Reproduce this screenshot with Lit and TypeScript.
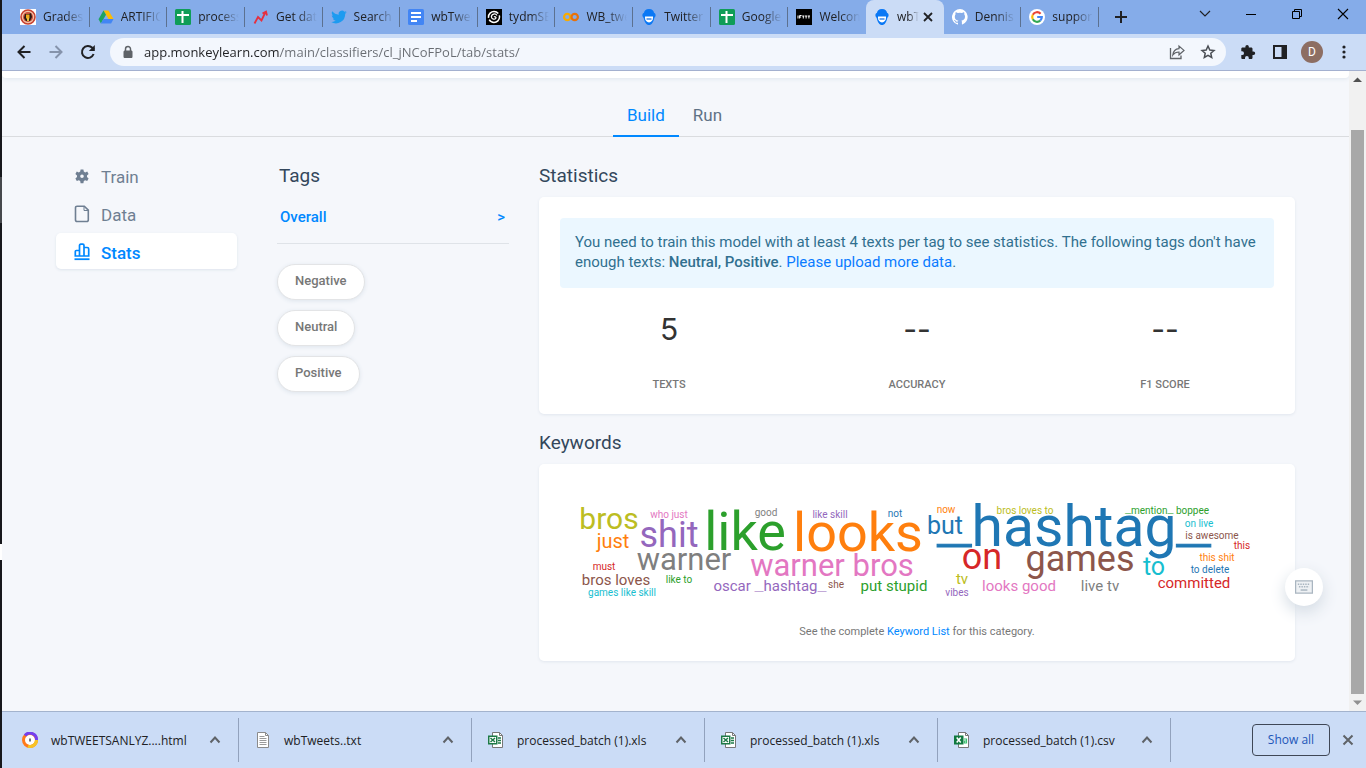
import { LitElement, html, svg, css } from "lit";
import { customElement } from "lit/decorators.js";
import { classMap } from "lit/directives/class-map.js";

const icons: Record<string, unknown> = {
  grades: svg`<rect width="16" height="16" fill="#fff"/><circle cx="8" cy="8" r="7" fill="#f2c3a8" stroke="#c8402f" stroke-width="1.600"/><circle cx="8" cy="8" r="5" fill="#c8523c"/><path d="M5 5h4l2-1 1 4-2 4H6L4 9z" fill="#2b1a14"/><path d="M6 5.500h3.500v4H6z" fill="#f1a91e"/><path d="M7 9h2v3H7z" fill="#e8c23c"/>`,
  drive: svg`<path d="M5.5 1.5h5l5 8.6h-5z" fill="#fbbc04"/><path d="M5.5 1.5 8 5.8 2.9 14.4.5 10.2z" fill="#1ea362"/><path d="M5.3 10.1h10.2l-2.400 4.300H2.900z" fill="#4285f4"/>`,
  sheets: svg`<rect width="16" height="16" rx="1.5" fill="#0f9d58"/><path d="M6.500 2h2v12h-2zM2 5h12v2H2z" fill="#fff"/>`,
  trend: svg`<path d="M1.500 14.500 5 8l3.500 3.500L12.500 3M9.500 4.500l3.500-2 1 4" fill="none" stroke="#e5303f" stroke-width="1.800"/>`,
  twitter: svg`<path d="M15.800 3.200c-.6.3-1.200.4-1.800.5.7-.4 1.100-1 1.400-1.700-.6.4-1.300.6-2 .8A3.200 3.200 0 0 0 7.800 5.700C5.200 5.600 2.800 4.300 1.200 2.300c-.9 1.500-.4 3.300 1 4.300-.5 0-1-.2-1.400-.4 0 1.500 1 2.900 2.500 3.200-.5.1-1 .1-1.400 0 .4 1.300 1.600 2.200 3 2.200A6.500 6.500 0 0 1 .2 13 9.200 9.200 0 0 0 14.200 4.800c.6-.4 1.200-1 1.600-1.600z" fill="#1d9bf0"/>`,
  docs: svg`<rect width="16" height="16" rx="1.500" fill="#4285f4"/><path d="M3 4h10M3 8h10M3 12h6" stroke="#fff" stroke-width="1.800"/>`,
  spiral: svg`<rect width="16" height="16" fill="#000"/><circle cx="8" cy="8" r="5.500" fill="none" stroke="#fff" stroke-width="1.500" stroke-dasharray="14 2"/><path d="M8 8a1.200 1.200 0 0 1 2 1 2.500 2.500 0 0 1-4.600-1A3 3 0 0 1 11 6.500" fill="none" stroke="#fff" stroke-width="1.300"/>`,
  colab: svg`<circle cx="4.300" cy="8" r="3.200" fill="none" stroke="#f9ab00" stroke-width="2.200"/><circle cx="11.700" cy="8" r="3.200" fill="none" stroke="#e8710a" stroke-width="2.200"/>`,
  monkey: svg`<path d="M8 0c3.300 0 4.900 2 5 3.700 1.200.5 1.600 1.500 1.600 2.600 0 1.300-.6 2-1.300 2.600C12.600 13 10.500 16 8 16s-4.600-3-5.300-7.100C2 8.300 1.400 7.600 1.400 6.300c0-1.100.4-2.100 1.600-2.600C3.100 2 4.700 0 8 0z" fill="#0a78f5"/><path d="M4 7.500h8v1.300C12 11.500 10.200 13.500 8 13.500S4 11.500 4 8.800z" fill="#fff"/><path d="M5.500 10h5" stroke="#0a6ae0" stroke-width="1.200"/>`,
  ifttt: svg`<rect width="16" height="16" fill="#000"/><path d="M2 6.500v3M3.600 9.500v-3h2M3.600 8h1.500M6.200 7h2.200M7.300 7v2.500M9 7h2.200M10.100 7v2.500M11.800 7H14M12.900 7v2.500" stroke="#fff" stroke-width="1" fill="none"/>`,
  github: svg`<path d="M8 0a8 8 0 0 0-2.500 15.600c.4.1.5-.2.5-.4v-1.500c-2 .5-2.600-.5-2.800-1-.1-.2-.5-1-.9-1.100-.3-.2-.7-.6 0-.6s1.100.6 1.200.8c.7 1.200 1.900.9 2.400.7.1-.5.300-.9.5-1.100-1.800-.2-3.600-.9-3.600-4 0-.9.3-1.600.8-2.100-.1-.2-.4-1 .1-2.100 0 0 .7-.2 2.200.8a7.600 7.600 0 0 1 4 0c1.500-1 2.200-.8 2.200-.8.4 1.100.2 1.900.1 2.100.5.600.8 1.300.8 2.100 0 3.100-1.900 3.800-3.700 4 .3.200.6.7.6 1.500v2.200c0 .2.100.5.5.4A8 8 0 0 0 8 0z" fill="#fff"/>`,
  google: svg`<circle cx="8" cy="8" r="8" fill="#fff"/><g fill="none" stroke-width="2.200"><path d="M11.600 4.800A4.800 4.800 0 0 0 3.800 5.700" stroke="#ea4335"/><path d="M3.800 5.700a4.800 4.800 0 0 0 0 4.600" stroke="#fbbc05"/><path d="M3.800 10.300a4.800 4.800 0 0 0 7.400 1.300" stroke="#34a853"/><path d="M11.200 11.600A4.800 4.800 0 0 0 12.800 8H8.200" stroke="#4285f4"/></g>`,
  avast: svg`<circle cx="8" cy="8" r="6.500" fill="#fff" stroke="#ff7a1a" stroke-width="3"/><path d="M3 3.500A6.500 6.500 0 0 1 14.500 8" fill="none" stroke="#7340f0" stroke-width="3"/><path d="M14.500 8A6.500 6.500 0 0 1 6 14.200" fill="none" stroke="#f7c325" stroke-width="3"/><path d="M5 5.500h6v4L8 13 5 9.500z" fill="#fff"/><path d="M7.200 6.500h1.600v3H7.200z" fill="#555"/>`,
  txt: svg`<path d="M2.500.5h8l3 3v12h-11z" fill="#fff" stroke="#8b8b8b"/><path d="M10.500.5v3h3" fill="none" stroke="#8b8b8b"/><path d="M4.500 4.500h5M4.500 6.500h7M4.500 8.500h7M4.500 10.500h7M4.500 12.500h7" stroke="#9a9a9a"/>`,
  xls: svg`<path d="M4.500.5h7l3 3v12h-10z" fill="#fff" stroke="#777"/><path d="M11.500.5v3h3" fill="none" stroke="#777"/><path d="M10 6h3M10 8.500h3M10 11h3" stroke="#1d7a46" stroke-width="1.500"/><rect y="3.500" width="9.500" height="9" fill="#1d7a46"/><rect x="1.500" y="5" width="6.500" height="6" fill="#fff"/><path d="M2.500 6 7 10M7 6 2.500 10" stroke="#1d7a46" stroke-width="1.500"/>`,
  csv: svg`<path d="M4.500.5h7l3 3v12h-10z" fill="#fff" stroke="#777"/><path d="M11.500.5v3h3" fill="none" stroke="#777"/><path d="M10 7h2.500v4H10.500v-2h2" fill="none" stroke="#3cc072" stroke-width="1.200"/><rect y="3.500" width="9.500" height="9" fill="#10793f"/><path d="m2.700 5.500 4 5M6.700 5.500l-4 5" stroke="#fff" stroke-width="1.500"/>`,
  back: svg`<path d="M14.500 8H2.500M8.500 2 2.500 8l6 6" fill="none" stroke="#202124" stroke-width="2"/>`,
  forward: svg`<path d="M1.500 8h12M7.500 2l6 6-6 6" fill="none" stroke="#8593ab" stroke-width="2"/>`,
  reload: svg`<path d="M13.600 10A6 6 0 1 1 12.300 3.800L14 5.500" fill="none" stroke="#202124" stroke-width="2"/><path d="M14.800 1v6h-6z" fill="#202124"/>`,
  lock: svg`<path d="M5 6.500h6c1 0 1.500.5 1.500 1.500v4.500c0 1-.5 1.500-1.500 1.500H5c-1 0-1.500-.5-1.500-1.500V8c0-1 .5-1.500 1.500-1.500z" fill="#5f6368"/><path d="M5.500 7V5a2.500 2.500 0 0 1 5 0V7" fill="none" stroke="#5f6368" stroke-width="1.500"/>`,
  share: svg`<path d="M1.500 4v10.500h10.500v-3" fill="none" stroke="#5f6368" stroke-width="1.300"/><path d="M10 2v2.700C6 5 4.200 7.600 3.800 11 5.400 8.800 7.200 8 10 8v2.800L15 6.400z" fill="none" stroke="#5f6368" stroke-width="1.200"/>`,
  star: svg`<path d="m8 2 1.800 4 4.200.5-3.200 2.800.9 4.200L8 11.400l-3.700 2.100.9-4.200L2 6.500 6.200 6z" fill="none" stroke="#4a4e54" stroke-width="1.500"/>`,
  puzzle: svg`<path d="M13.500 7.500h-1V4.800c0-.7-.6-1.300-1.300-1.300H8.800V2.600a1.700 1.700 0 1 0-3.400 0v.9H2.500c-.7 0-1.200.6-1.200 1.300v2.500h.8a1.900 1.900 0 0 1 0 3.800h-.8v2.600c0 .7.5 1.300 1.200 1.300H5v-1a1.900 1.900 0 0 1 3.800 0v1h2.400c.7 0 1.300-.6 1.300-1.300v-2.800h1a1.700 1.700 0 1 0 0-3.400z" fill="#202124"/>`,
  panel: svg`<path d="M2 2h12v12H2z" fill="none" stroke="#202124" stroke-width="2"/><path d="M9.500 2H14v12H9.500z" fill="#202124"/>`,
  dots: svg`<g fill="#202124"><circle cx="8" cy="3" r="1.600"/><circle cx="8" cy="8" r="1.600"/><circle cx="8" cy="13" r="1.600"/></g>`,
  plus: svg`<path d="M8 2v12M2 8h12" stroke="#202124" stroke-width="2"/>`,
  close: svg`<path d="m4 4 8 8M12 4l-8 8" stroke="#202124" stroke-width="1.800"/>`,
  chevdown: svg`<path d="m3 5 5 5 5-5" fill="none" stroke="#202124" stroke-width="1.200"/>`,
  minimize: svg`<path d="M3 8.500h10" stroke="#000"/>`,
  restore: svg`<path d="M3.500 5.500h7v7h-7zM5.500 5.500v-2h7v7h-2" fill="none" stroke="#000"/>`,
  quit: svg`<path d="m3 3 10 10M13 3 3 13" stroke="#000" stroke-width="1.100"/>`,
  chevup: svg`<path d="m3.500 10.500 4.500-5 4.500 5" fill="none" stroke="#5f6368" stroke-width="2"/>`,
  dismiss: svg`<path d="m3.500 3.500 9 9M12.500 3.500l-9 9" stroke="#5f6368" stroke-width="2"/>`,
  gear: svg`<path fill-rule="evenodd" d="M6.600 1.500h2.800l.4 2.100 1.400.8 2-.8 1.400 2.500-1.600 1.400v1.600l1.600 1.400-1.400 2.500-2-.8-1.400.8-.4 2.200H6.600l-.4-2.200-1.400-.8-2 .8-1.400-2.500L3 9.100V7.500L1.400 6.100l1.400-2.500 2 .8 1.400-.8zM8 6.500a1.800 1.800 0 1 0 0 3.600 1.800 1.800 0 0 0 0-3.600z" fill="#6f7f92"/>`,
  file: svg`<path d="M3 .2h7.300l4 4v9.800a1.500 1.500 0 0 1-1.500 1.500H3A1.500 1.500 0 0 1 1.500 14V1.700A1.500 1.500 0 0 1 3 .2z" fill="none" stroke="#6f7f92" stroke-width="1.600"/><path d="M10 .5v4h4" fill="none" stroke="#6f7f92"/>`,
  stats: svg`<path d="M1.300 12V7.500q0-1 1-1H5.500V12zM5.500 12V1.500q0-1.300 1.300-1.300h1.900q1.300 0 1.300 1.300V12zM10 12V3.500h3.200q1.500 0 1.500 1.500v7z" fill="none" stroke="#0088ff" stroke-width="1.700"/><path d="M.5 15.200h15" stroke="#0088ff" stroke-width="1.800"/>`,
  keyboard: svg`<path d="M.5 2.500h15v11H.5z" fill="#eef1f4" stroke="#a9b5c0" stroke-width="1.200"/><path d="M2.500 5.500h11M3.500 7.800h9" stroke="#a9b5c0" stroke-width="1.300" stroke-dasharray="1.300 .9"/><path d="M5 10.700h6" stroke="#a9b5c0" stroke-width="1.300"/>`,
};

const icon = (name: string, size = "i16") =>
  html`<svg class="icon ${size}" viewBox="0 0 16 16" aria-hidden="true">${icons[name]}</svg>`;

const browserTabs = [
  ["grades", "Grades:"],
  ["drive", "ARTIFIC"],
  ["sheets", "process"],
  ["trend", "Get dat"],
  ["twitter", "Search"],
  ["docs", "wbTwee"],
  ["spiral", "tydmSE"],
  ["colab", "WB_twe"],
  ["monkey", "Twitter"],
  ["sheets", "Google"],
  ["ifttt", "Welcon"],
  ["monkey", "wbT"],
  ["github", "Dennis"],
  ["google", "suppor"],
];
const activeTab = 11;

const downloads = [
  ["avast", "wbTWEETSANLYZ....html"],
  ["txt", "wbTweets..txt"],
  ["xls", "processed_batch (1).xls"],
  ["xls", "processed_batch (1).xls"],
  ["csv", "processed_batch (1).csv"],
];

/* text, centre x, baseline y, size step, colour */
const words: [string, number, number, string, string][] = [
  ["bros", 49, 44, "w30", "olive"],
  ["who just", 109, 33, "w10", "pink"],
  ["just", 53, 63, "w20", "orange"],
  ["shit", 109, 62, "w36", "purple"],
  ["like", 185, 65, "w54", "green"],
  ["good", 206, 31, "w10", "gray"],
  ["looks", 298, 66, "w54", "orange"],
  ["like skill", 270, 33, "w10", "purple"],
  ["not", 335, 32, "w10", "blue"],
  ["warner", 124, 85, "w31", "gray"],
  ["warner bros", 272, 91, "w31", "pink"],
  ["must", 44, 85, "w10", "red"],
  ["bros loves", 56, 100, "w15", "brown"],
  ["like to", 119, 98, "w10", "green"],
  ["games like skill", 62, 111, "w10", "cyan"],
  ["oscar _hashtag_", 210, 106, "w15", "purple"],
  ["she", 276, 103, "w10", "brown"],
  ["put stupid", 334, 106, "w15", "green"],
  ["now", 386, 28, "w10", "orange"],
  ["but", 385, 49, "w25", "blue"],
  ["_hashtag_", 514, 61, "w57", "blue"],
  ["bros loves to", 465, 29, "w10", "olive"],
  ["_mention_ boppee", 607, 29, "w10", "green"],
  ["on live", 639, 42, "w10", "cyan"],
  ["is awesome", 652, 54, "w10", "brown"],
  ["this", 682, 64, "w10", "red"],
  ["on", 422, 84, "w36", "red"],
  ["games", 520, 86, "w36", "brown"],
  ["to", 594, 90, "w25", "cyan"],
  ["this shit", 657, 76, "w10", "orange"],
  ["to delete", 650, 88, "w10", "blue"],
  ["committed", 634, 103, "w15", "red"],
  ["tv", 402, 99, "w15", "olive"],
  ["vibes", 397, 111, "w10", "purple"],
  ["looks good", 459, 106, "w15", "pink"],
  ["live tv", 540, 106, "w15", "gray"],
];

/* Underscores are drawn wide, as bars level with the baseline. */
const wordText = (text: string) =>
  text.split(/(_)/).filter(Boolean).map((part) =>
    part === "_"
      ? svg`<tspan class="bar">_</tspan>`
      : svg`<tspan>${part}</tspan>`);

const base = css`
  * { box-sizing: border-box; }
  button, input { font: inherit; color: inherit; margin: 0; padding: 0; border: 0; background: none; }
  button { cursor: pointer; display: flex; align-items: center; justify-content: center; }
  a { text-decoration: none; }
  .icon { display: block; flex: none; width: 16px; height: 16px; }
  .i18 { width: 18px; height: 18px; }
`;

@customElement("browser-header")
export class BrowserHeader extends LitElement {
  static styles = [base, css`
    :host { display: block; font: 12px/16px "Open Sans", "Noto Sans", sans-serif; color: #202124; }
    .strip { display: flex; height: 34px; background: #85ace9; padding-left: 10px; }
    .tabs { display: flex; flex: 0 1 1087px; min-width: 0; }
    .tab { position: relative; display: flex; align-items: center; flex: 1 1 0; min-width: 0; padding: 0 4px 0 8px; }
    .tab::after { content: ""; position: absolute; right: 0; top: 7px; width: 1px; height: 20px; background: #5c7190; }
    .tab.active::after, .tab.before::after { display: none; }
    .tab.active { background: #cbdcf6; border-radius: 8px 8px 0 0; }
    .pick { gap: 7px; flex: 1; min-width: 0; height: 100%; justify-content: flex-start; }
    .shut { margin-right: 4px; }
    .title { flex: 1; min-width: 0; overflow: hidden; white-space: nowrap; text-align: left;
      mask-image: linear-gradient(to right, #000 50%, transparent 95%); }
    .new { width: 44px; }
    .window { display: flex; margin-left: auto; height: 28px; }
    .window button { width: 46px; }
    .bar { display: flex; align-items: center; height: 37px; background: #cbdcf6; border-bottom: 1px solid #a3b0cf; padding: 0 6px; }
    .nav { width: 32px; height: 32px; }
    .omni { display: flex; align-items: center; flex: 1; height: 28px; margin: 0 6px; padding: 0 10px; gap: 8px; border-radius: 14px; background: #f3f7fd; }
    .url { flex: 1; min-width: 0; font-size: 13px; line-height: 20px; color: transparent; outline: none;
      background: linear-gradient(to right, #202124 135px, #686c72 135px); -webkit-background-clip: text; background-clip: text; }
    .tools { display: flex; gap: 15px; }
    .avatar { width: 22px; height: 22px; border-radius: 50%; background: #8d6e63; color: #fff; margin: 0 5px; font-family: Roboto, sans-serif; }
  `];
  render() {
    return html`
      <div class="strip">
        <div class="tabs">
          ${browserTabs.map(([name, title], i) => html`
            <div class=${classMap({ tab: true, active: i === activeTab, before: i === activeTab - 1 })}>
              <button class="pick">${icon(name)}<span class="title">${title}</span></button>
              ${i === activeTab ? html`<button class="shut" aria-label="Close tab">${icon("close")}</button>` : ""}
            </div>`)}
        </div>
        <button class="new" aria-label="New tab">${icon("plus")}</button>
        <div class="window">
          <button aria-label="Search tabs">${icon("chevdown")}</button>
          <button aria-label="Minimize">${icon("minimize")}</button>
          <button aria-label="Restore">${icon("restore")}</button>
          <button aria-label="Close">${icon("quit")}</button>
        </div>
      </div>
      <div class="bar">
        <button class="nav" aria-label="Back">${icon("back")}</button>
        <button class="nav" aria-label="Forward">${icon("forward")}</button>
        <button class="nav" aria-label="Reload">${icon("reload")}</button>
        <div class="omni">
          ${icon("lock")}
          <input class="url" aria-label="Address" value="app.monkeylearn.com/main/classifiers/cl_jNCoFPoL/tab/stats/">
          <div class="tools">
            <button aria-label="Share">${icon("share")}</button>
            <button aria-label="Bookmark">${icon("star")}</button>
          </div>
        </div>
        <button class="nav" aria-label="Extensions">${icon("puzzle")}</button>
        <button class="nav" aria-label="Side panel">${icon("panel")}</button>
        <button class="avatar" aria-label="Profile">D</button>
        <button class="nav" aria-label="Menu">${icon("dots")}</button>
      </div>`;
  }
}

@customElement("download-shelf")
export class DownloadShelf extends LitElement {
  static styles = [base, css`
    :host { display: flex; align-items: center; height: 57px; padding: 0 10px 0 4px; background: #cbdcf6; border-top: 1px solid #a3b3cd;
      font: 12px/16px "Open Sans", "Noto Sans", sans-serif; color: #202124; }
    .item { display: flex; align-items: center; flex: 0 1 233px; min-width: 0; height: 44px; padding: 0 15px 0 16px; border-right: 1px solid #92a2bd; }
    .open { flex: 1; min-width: 0; gap: 13px; justify-content: flex-start; white-space: nowrap; }
    .open span { padding-top: 2px; }
    .all { width: 78px; height: 32px; margin-left: auto; border: 1px solid #3f4756; border-radius: 4px; color: #2156b8; }
    .shut { margin-left: 10px; }
  `];
  render() {
    return html`
      ${downloads.map(([name, file]) => html`
        <div class="item">
          <button class="open">${icon(name)}<span>${file}</span></button>
          <button aria-label="Options for ${file}">${icon("chevup")}</button>
        </div>`)}
      <button class="all">Show all</button>
      <button class="shut" aria-label="Close downloads">${icon("dismiss")}</button>`;
  }
}

@customElement("stats-page")
export class StatsPage extends LitElement {
  static styles = [base, css`
    :host { display: block; background: #f5f7fb; font: 15px/20px Roboto, sans-serif; color: #33475b; }
    .top { height: 7px; background: #fff; border-radius: 0 0 4px 4px; box-shadow: 0 1px 4px #dfe6ee; }
    .modes { display: flex; justify-content: center; height: 59px; padding-top: 18px; border-bottom: 1px solid #dadcdf; font-size: 17px; line-height: 39px; }
    .modes a { height: 41px; padding: 0 16px 0 14px; color: #5f7285; }
    .modes .on { color: #0088ff; border-bottom: 2px solid #0088ff; padding: 0 14px; }
    .cols { display: grid; grid-template-columns: 181px 272px minmax(0, 1fr); padding: 20px 54px 50px; }
    .menu { display: flex; flex-direction: column; gap: 2px; }
    .menu a { display: flex; align-items: center; gap: 11px; height: 36px; padding: 4px 18px 0; border-radius: 5px; font-size: 17px; color: #6f7f92; }
    .menu svg { margin-bottom: 2px; overflow: visible; }
    .menu .on { background: #fff; color: #0088ff; font-weight: 500; box-shadow: 0 1px 3px #dde4ec; }
    .tags { margin-left: 40px; }
    h2 { margin: 0; font-size: 19px; font-weight: 400; line-height: 20px; padding: 9px 0 11px; color: #33475b; }
    .tags h2 { padding-left: 2px; }
    .overall { display: flex; justify-content: space-between; align-items: center; height: 47px; padding: 0 4px 6px 3px; border-bottom: 1px solid #dfe3e8; font-weight: 500; color: #0088ff; }
    .pills { display: flex; flex-direction: column; align-items: flex-start; gap: 10px; margin-top: 20px; }
    .pill { height: 36px; padding: 0 17px 2px; border: 1px solid #e3e4e6; border-radius: 18px; background: #fff; box-shadow: 0 1px 4px #dde4ec; font-size: 13px; font-weight: 500; color: #777; }
    .data { margin-left: 30px; min-width: 0; }
    .card { padding: 21px; border-radius: 5px; background: #fff; box-shadow: 0 1px 3px #e1e6ee; }
    .notice { margin: 0; padding: 14px 14px 16px 15px; border-radius: 4px; background: #ebf7ff; color: #31708f; }
    .notice b { font-weight: 500; }
    .notice a { color: #0a7bff; }
    .figures { display: grid; grid-template-columns: repeat(3, 1fr); margin: 20px -15px 0; text-align: center; }
    .figures div { display: flex; flex-direction: column; gap: 27px; }
    .figures dd { order: -1; margin: 0; font-family: Inter, sans-serif; font-size: 30px; line-height: 42px; color: #333; }
    .figures dt { font-size: 11px; line-height: 16px; font-weight: 500; color: #777; }
    .data h2.next { padding-top: 19px; }
    .cloud { display: block; width: 100%; }
    .w10 { font-size: 10px; } .w15 { font-size: 15px; } .w20 { font-size: 20px; } .w25 { font-size: 25px; }
    .w31 { font-size: 31px; } .w30 { font-size: 30px; } .w36 { font-size: 36px; } .w54 { font-size: 54px; } .w57 { font-size: 57px; }
    .bar { font-family: "Liberation Mono", monospace; font-weight: 700; baseline-shift: 8%; }
    .w57 .bar { stroke: #1f77b4; stroke-width: 1px; }
    .blue { fill: #1f77b4; } .orange { fill: #ff7f0e; } .green { fill: #2ca02c; } .red { fill: #d62728; } .purple { fill: #9467bd; }
    .brown { fill: #8c564b; } .pink { fill: #e377c2; } .gray { fill: #7f7f7f; } .olive { fill: #bcbd22; } .cyan { fill: #17becf; }
    .more { margin: 14px 0 0; text-align: center; font-size: 11px; line-height: 16px; color: #777; }
    .more a { color: #0088ff; }
  `];
  render() {
    return html`
      <div class="top"></div>
      <nav class="modes"><a class="on" href="#build">Build</a><a href="#run">Run</a></nav>
      <div class="cols">
        <nav class="menu">
          <a href="#train">${icon("gear")}Train</a>
          <a href="#data">${icon("file")}Data</a>
          <a class="on" href="#stats">${icon("stats")}Stats</a>
        </nav>
        <section class="tags">
          <h2>Tags</h2>
          <a class="overall" href="#overall"><span>Overall</span><span>&gt;</span></a>
          <div class="pills">
            ${["Negative", "Neutral", "Positive"].map((t) => html`<button class="pill">${t}</button>`)}
          </div>
        </section>
        <div class="data">
          <h2>Statistics</h2>
          <section class="card">
            <p class="notice">You need to train this model with at least 4 texts per tag to see statistics. The following tags don't have enough texts: <b>Neutral, Positive</b>. <a href="#upload">Please upload more data</a>.</p>
            <dl class="figures">
              <div><dt>TEXTS</dt><dd>5</dd></div>
              <div><dt>ACCURACY</dt><dd>--</dd></div>
              <div><dt>F1 SCORE</dt><dd>--</dd></div>
            </dl>
          </section>
          <h2 class="next">Keywords</h2>
          <section class="card">
            <svg class="cloud" viewBox="0 0 714 125" text-anchor="middle">
              ${words.map(([t, x, y, size, color]) => svg`<text class="${size} ${color}" x=${x} y=${y}>${wordText(t)}</text>`)}
            </svg>
            <p class="more">See the complete <a href="#keywords">Keyword List</a> for this category.</p>
          </section>
        </div>
      </div>`;
  }
}

@customElement("app-root")
export class AppRoot extends LitElement {
  static styles = [base, css`
    :host { display: flex; height: 100vh; overflow: hidden; }
    .edge { width: 2px; background: linear-gradient(#17181c 177px, #46484c 177px 223px, #17181c 223px 544px, #fff 544px 560px, #17181c 560px); }
    .window { display: flex; flex-direction: column; flex: 1; min-width: 0; }
    .view { position: relative; display: flex; flex: 1; min-height: 0; }
    stats-page { flex: 1; min-width: 0; overflow: hidden; }
    .scroll { display: flex; flex-direction: column; align-items: center; width: 17px; background: #f1f1f1; }
    .arrow { height: 17px; flex: none; }
    .track { flex: 1; width: 13px; padding-top: 42px; }
    .thumb { height: 100%; background: #a8a8a8; }
    .keys { position: absolute; right: 43px; bottom: 105px; width: 38px; height: 38px; border-radius: 50%; background: #fff; box-shadow: 0 6px 16px #d3dbe3; }
  `];
  render() {
    return html`
      <div class="edge"></div>
      <div class="window">
        <browser-header></browser-header>
        <div class="view">
          <stats-page></stats-page>
          <div class="scroll">
            <svg class="arrow" width="17" height="17" viewBox="0 0 17 17"><path d="M8.500 6.500 13 11H4z" fill="#505050"/></svg>
            <div class="track"><div class="thumb"></div></div>
            <svg class="arrow" width="17" height="17" viewBox="0 0 17 17"><path d="M8.500 11 13 6.500H4z" fill="#909090"/></svg>
          </div>
          <button class="keys" aria-label="Keyboard shortcuts">${icon("keyboard", "i18")}</button>
        </div>
        <download-shelf></download-shelf>
      </div>`;
  }
}
